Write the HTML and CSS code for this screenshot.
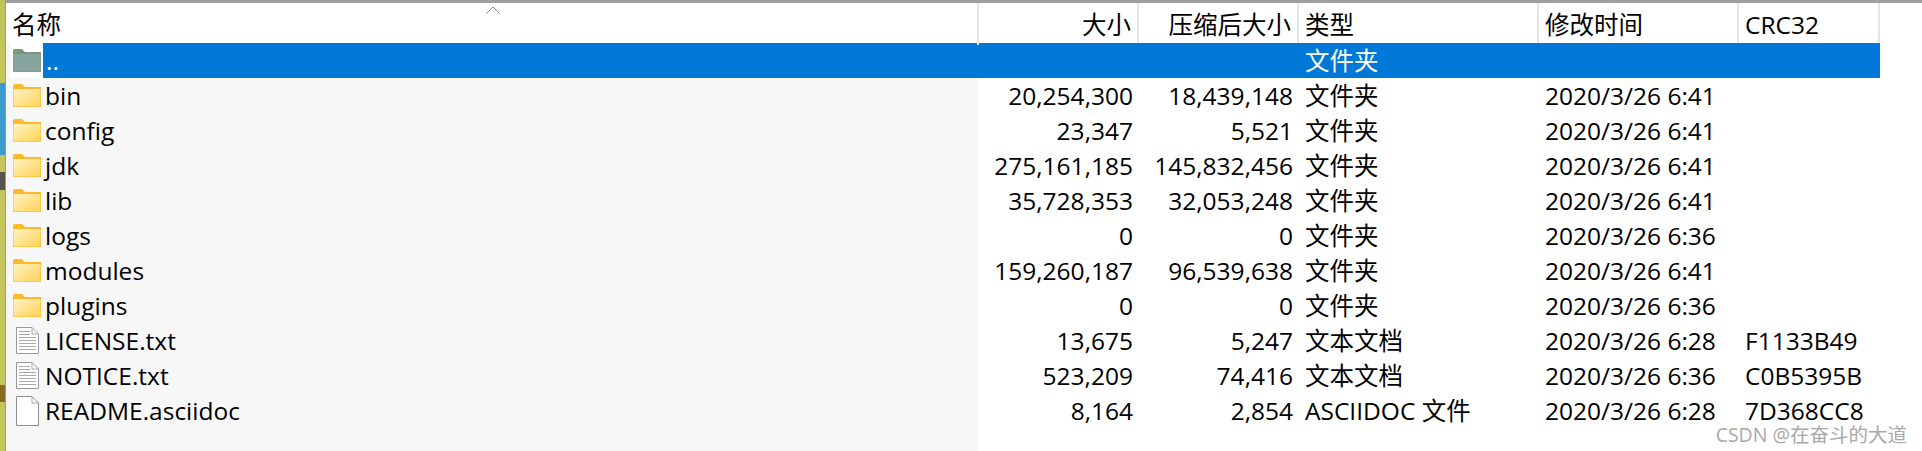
FILE: index.html
```html
<!DOCTYPE html>
<html lang="zh-CN">
  <head>
    <meta charset="UTF-8" />
    <title>压缩包文件列表</title>
    <link rel="stylesheet" href="styles.css">
  </head>
  <body>
    <div class="desktop-strip"></div>
    <div class="window">
      <svg width="0" height="0" class="defs">
        <defs>
          <linearGradient id="folderGrad" x1="0" y1="0" x2="1" y2="1">
            <stop offset="0" stop-color="#fff3c4" />
            <stop offset="1" stop-color="#ffd257" />
          </linearGradient>
          <symbol id="folder" viewBox="0 0 28 23">
            <path d="M0 2 Q0 0 2 0 H9 L12 3 H28 V23 H0 Z" fill="#fdb92c" />
            <rect x="0.5" y="5" width="27" height="17.5" fill="url(#folderGrad)" />
          </symbol>
          <symbol id="folder-up" viewBox="0 0 28 23">
            <path d="M0 2 Q0 0 2 0 H9 L12 3 H28 V23 H0 Z" fill="#7c9679" />
            <rect x="0.5" y="5" width="27" height="17.5" fill="#86a59f" />
          </symbol>
          <symbol id="file" viewBox="0 0 23 30">
            <path d="M0.5 0.5 H16 L22.5 7 V29.5 H0.5 Z" fill="#fff" stroke="#8e8e8e" />
            <path d="M16 0.5 V7 H22.5" fill="none" stroke="#a8a8a8" />
          </symbol>
          <symbol id="file-text" viewBox="0 0 23 27">
            <path d="M0.5 0.5 H16 L22.5 7 V26.5 H0.5 Z" fill="#fff" stroke="#999" />
            <path d="M16 0.5 V7 H22.5" fill="none" stroke="#a8a8a8" />
            <path d="M3 4.5 H14 M3 7.5 H14 M3 10.5 H20 M3 13.5 H20 M3 16.5 H20 M3 19.5 H20 M3 22.5 H20" stroke="#a9a9a9" />
          </symbol>
        </defs>
      </svg>

      <div class="list">
        <div class="row header">
          <div class="cell name">名称<span class="sort-arrow"><svg width="14" height="8" viewBox="0 0 14 8"><path d="M0.5 7.5 L7 1 L13.5 7.5" fill="none" stroke="#8a8a8a" /></svg></span></div>
          <div class="cell size">大小</div>
          <div class="cell packed">压缩后大小</div>
          <div class="cell type">类型</div>
          <div class="cell date">修改时间</div>
          <div class="cell crc">CRC32</div>
        </div>

        <div class="row selected">
          <div class="cell name"><span class="icon-box"><svg class="icon-folder"><use href="#folder-up" /></svg></span><span class="dots">..</span></div>
          <div class="cell size"></div>
          <div class="cell packed"></div>
          <div class="cell type">文件夹</div>
          <div class="cell date"></div>
          <div class="cell crc"></div>
        </div>

        <div class="row">
          <div class="cell name"><svg class="icon-folder"><use href="#folder" /></svg>bin</div>
          <div class="cell size">20,254,300</div>
          <div class="cell packed">18,439,148</div>
          <div class="cell type">文件夹</div>
          <div class="cell date">2020/3/26 6:41</div>
          <div class="cell crc"></div>
        </div>
        <div class="row">
          <div class="cell name"><svg class="icon-folder"><use href="#folder" /></svg>config</div>
          <div class="cell size">23,347</div>
          <div class="cell packed">5,521</div>
          <div class="cell type">文件夹</div>
          <div class="cell date">2020/3/26 6:41</div>
          <div class="cell crc"></div>
        </div>
        <div class="row">
          <div class="cell name"><svg class="icon-folder"><use href="#folder" /></svg>jdk</div>
          <div class="cell size">275,161,185</div>
          <div class="cell packed">145,832,456</div>
          <div class="cell type">文件夹</div>
          <div class="cell date">2020/3/26 6:41</div>
          <div class="cell crc"></div>
        </div>
        <div class="row">
          <div class="cell name"><svg class="icon-folder"><use href="#folder" /></svg>lib</div>
          <div class="cell size">35,728,353</div>
          <div class="cell packed">32,053,248</div>
          <div class="cell type">文件夹</div>
          <div class="cell date">2020/3/26 6:41</div>
          <div class="cell crc"></div>
        </div>
        <div class="row">
          <div class="cell name"><svg class="icon-folder"><use href="#folder" /></svg>logs</div>
          <div class="cell size">0</div>
          <div class="cell packed">0</div>
          <div class="cell type">文件夹</div>
          <div class="cell date">2020/3/26 6:36</div>
          <div class="cell crc"></div>
        </div>
        <div class="row">
          <div class="cell name"><svg class="icon-folder"><use href="#folder" /></svg>modules</div>
          <div class="cell size">159,260,187</div>
          <div class="cell packed">96,539,638</div>
          <div class="cell type">文件夹</div>
          <div class="cell date">2020/3/26 6:41</div>
          <div class="cell crc"></div>
        </div>
        <div class="row">
          <div class="cell name"><svg class="icon-folder"><use href="#folder" /></svg>plugins</div>
          <div class="cell size">0</div>
          <div class="cell packed">0</div>
          <div class="cell type">文件夹</div>
          <div class="cell date">2020/3/26 6:36</div>
          <div class="cell crc"></div>
        </div>
        <div class="row">
          <div class="cell name"><svg class="icon-file text"><use href="#file-text" /></svg>LICENSE.txt</div>
          <div class="cell size">13,675</div>
          <div class="cell packed">5,247</div>
          <div class="cell type">文本文档</div>
          <div class="cell date">2020/3/26 6:28</div>
          <div class="cell crc">F1133B49</div>
        </div>
        <div class="row">
          <div class="cell name"><svg class="icon-file text"><use href="#file-text" /></svg>NOTICE.txt</div>
          <div class="cell size">523,209</div>
          <div class="cell packed">74,416</div>
          <div class="cell type">文本文档</div>
          <div class="cell date">2020/3/26 6:36</div>
          <div class="cell crc">C0B5395B</div>
        </div>
        <div class="row">
          <div class="cell name"><svg class="icon-file"><use href="#file" /></svg>README.asciidoc</div>
          <div class="cell size">8,164</div>
          <div class="cell packed">2,854</div>
          <div class="cell type">ASCIIDOC 文件</div>
          <div class="cell date">2020/3/26 6:28</div>
          <div class="cell crc">7D368CC8</div>
        </div>
      </div>

      <div class="watermark">CSDN @在奋斗的大道</div>
    </div>
  </body>
</html>
```

FILE: styles.css
```css
html,
body {
  margin: 0;
  padding: 0;
  height: 451px;
  overflow: hidden;
  background: #fff;
}
body {
  display: flex;
  font-family: "Open Sans", "Noto Sans CJK SC", sans-serif;
  font-size: 24.5px;
  color: #000;
}

/* bit of the desktop showing left of the window */
.desktop-strip {
  width: 6px;
  flex: none;
  box-sizing: border-box;
  border-right: 1px solid #9a9a90;
  background: linear-gradient(
    to bottom,
    #c3c45c 0 83px,
    #3b9ccc 83px 155px,
    #c3c45c 155px 172px,
    #55554a 172px 190px,
    #c3c45c 190px 385px,
    #8a6a20 385px 402px,
    #c3c45c 402px
  );
}

.window {
  position: relative;
  flex: 1;
  border-top: 3px solid #a0a0a0;
  background: linear-gradient(to right, #f7f7f7 972px, #fff 972px);
}
.defs {
  position: absolute;
}

.list {
  width: 1874px;
}
.row {
  display: grid;
  grid-template-columns: 973px 160px 160px 240px 200px 141px;
  height: 35px;
  line-height: 35px;
  white-space: nowrap;
}
.cell {
  display: flex;
  align-items: center;
  padding: 0 6px;
  box-sizing: border-box;
}
.size,
.packed {
  justify-content: flex-end;
}

.header {
  height: 40px;
  line-height: 40px;
  background: #fff;
}
.header .cell {
  border-right: 2px solid #e5e5e5;
  padding-top: 2px;
}
.header .name {
  position: relative;
}
.sort-arrow {
  position: absolute;
  top: 3px;
  left: 480px;
  display: flex;
}

.selected .cell {
  background: #0078d7;
  color: #fff;
}
.selected .name {
  padding: 0;
  background: none;
}
.icon-box {
  display: flex;
  align-items: center;
  width: 32px;
  height: 35px;
  margin-left: 5px;
  padding-left: 2px;
  box-sizing: border-box;
  background: #fff;
}
.dots {
  flex: 1;
  padding-left: 3px;
  background: #0078d7;
}

.icon-folder {
  width: 28px;
  height: 23px;
  margin-left: 1px;
  margin-right: 4px;
  flex: none;
}
.icon-box .icon-folder {
  margin-left: 0;
  margin-right: 0;
}
.icon-file {
  width: 23px;
  height: 30px;
  margin-left: 4px;
  margin-right: 6px;
  flex: none;
}
.icon-file.text {
  height: 27px;
}

.watermark {
  position: absolute;
  right: 15px;
  bottom: 3px;
  font-size: 19.5px;
  color: #a8a8a8;
}
```
